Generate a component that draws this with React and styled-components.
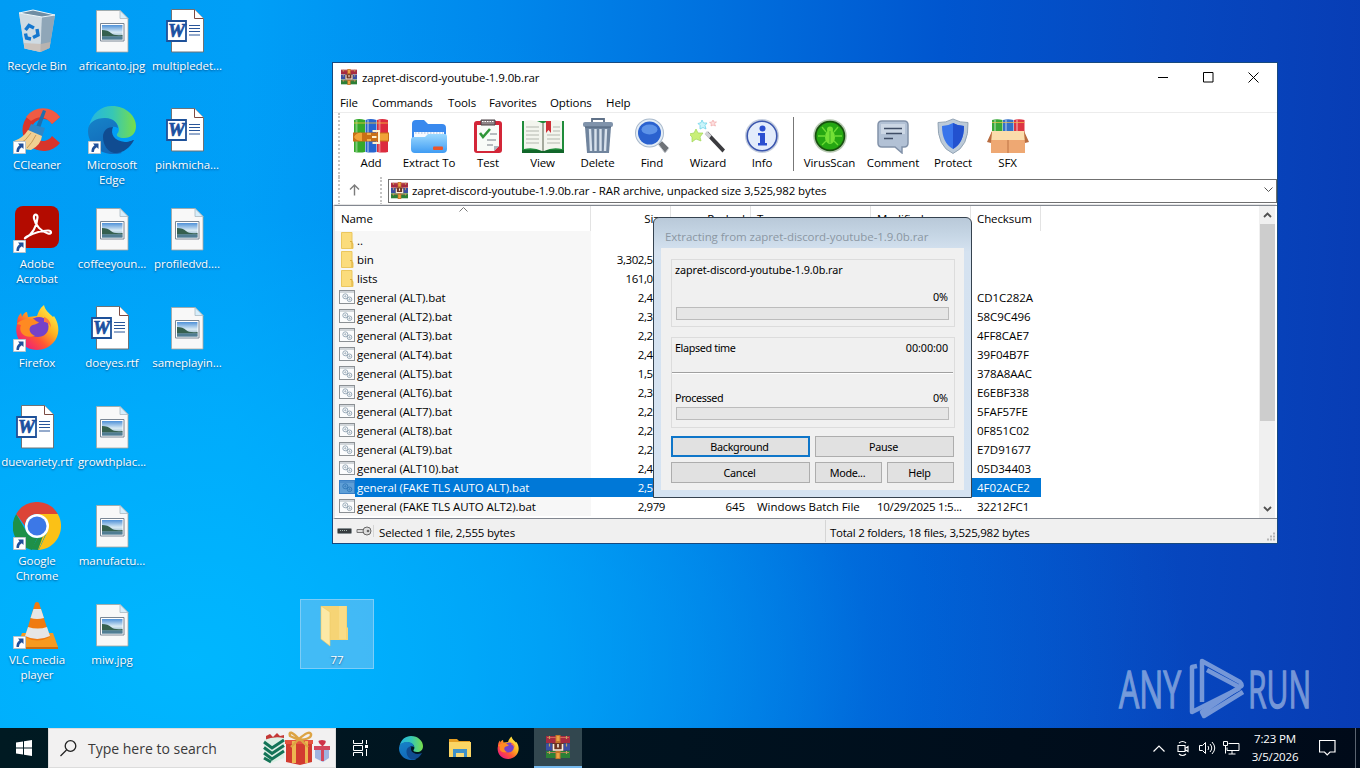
import { useId } from 'react';
import styled, { createGlobalStyle } from 'styled-components';

const GlobalStyle = createGlobalStyle`
  * {
    box-sizing: border-box;
  }

  body {
    margin: 0;
    overflow: hidden;
    font-family: 'Open Sans', sans-serif;
    font-size: 11.5px;
    letter-spacing: -0.1px;
    color: #000;
  }

  svg {
    display: block;
    flex: none;
  }
`;

const Screen = styled('div')`
  position: relative;
  display: flex;
  flex-direction: column;
  width: 1360px;
  height: 768px;
  overflow: hidden;
  background: radial-gradient(
      ellipse 1000px 660px at 190px 660px,
      rgba(0, 184, 255, 0.95),
      rgba(0, 180, 255, 0.62) 36%,
      rgba(0, 160, 250, 0.2) 68%,
      rgba(0, 150, 245, 0) 100%
    ),
    linear-gradient(
      92deg,
      #009cf4 0%,
      #009ff7 18%,
      #0088ec 36%,
      #0070de 52%,
      #0056cf 68%,
      #0648c0 84%,
      #083cb4 100%
    );
`;

const Desktop = styled('main')`
  display: grid;
  grid-template-columns: repeat(3, 75px);
  grid-template-rows: repeat(7, 99px);
  grid-auto-flow: column;
  height: 728px;
`;

const Shortcut = styled('div')`
  display: flex;
  flex-direction: column;
  align-items: center;
  padding-top: 7px;
  width: 74px;
`;

const ShortcutIcon = styled('div')`
  position: relative;
  width: 48px;
  height: 48px;
`;

const ShortcutLabel = styled('span')`
  margin-top: 3px;
  color: #fff;
  line-height: 15px;
  text-align: center;
  white-space: pre;
  letter-spacing: -0.05px;
  text-shadow: 0 1px 2px rgba(0, 40, 90, 0.7);
`;

const LinkBadge = styled('svg')`
  position: absolute;
  left: 0;
  bottom: 0;
`;

const SelectedFolder = styled('div')`
  position: absolute;
  left: 300px;
  top: 599px;
  display: flex;
  flex-direction: column;
  align-items: center;
  width: 74px;
  height: 70px;
  padding-top: 1px;
  background: rgba(120, 195, 240, 0.55);
  border: 1px solid #7ccdf8;
`;

const Watermark = styled('svg')`
  position: absolute;
  left: 1112px;
  top: 652px;
  overflow: visible;
`;

const Window = styled('section')`
  position: absolute;
  left: 332px;
  top: 62px;
  display: flex;
  flex-direction: column;
  width: 946px;
  height: 482px;
  padding-left: 1px;
  background: #fff;
  border: 1px solid #17497f;
`;

const TitleBar = styled('header')`
  display: flex;
  align-items: center;
  height: 28px;
  margin-bottom: 2px;
  padding: 0 3px 0 7px;
  gap: 5px;
`;

const Title = styled('span')`
  flex: 1;
  letter-spacing: -0.1px;
`;

const WindowButton = styled('span')`
  display: flex;
  justify-content: center;
  align-items: center;
  width: 40.5px;
  height: 28px;
`;

const MenuBar = styled('nav')`
  display: flex;
  align-items: center;
  gap: 14px;
  height: 20px;
  padding-left: 6px;
  border-bottom: 1px solid #ececec;
`;

const MenuItem = styled('span')`
  width: ${props => props.$width}px;
  white-space: nowrap;
`;

const ToolBar = styled('div')`
  display: flex;
  height: 64px;
  margin-left: 4px;
  padding-left: 5px;
  border-left: 2px dotted #c4c4c4;
`;

const Tool = styled('div')`
  display: flex;
  flex-direction: column;
  align-items: center;
  width: ${props => props.$width}px;
  padding-top: 5px;
  line-height: 16px;
  white-space: nowrap;
`;

const ToolLabel = styled('span')`
  margin-top: 1px;
`;

const ToolSeparator = styled('span')`
  width: 1px;
  height: 54px;
  margin: 4px 6px;
  background: #777;
`;

const AddressRow = styled('div')`
  display: flex;
  align-items: center;
  height: 28px;
  margin-left: 4px;
  border-left: 2px dotted #c4c4c4;
`;

const UpButton = styled('span')`
  display: flex;
  align-items: center;
  justify-content: center;
  width: 42px;
  height: 28px;
  padding: 0 11px 2px 0;
  border-right: 2px dotted #c4c4c4;
`;

const Address = styled('div')`
  display: flex;
  flex: 1;
  align-items: center;
  gap: 4px;
  height: 24px;
  margin-left: 6px;
  padding: 0 3px 2px 2px;
  border: 1px solid #707070;
`;

const AddressText = styled('span')`
  flex: 1;
  letter-spacing: -0.1px;
`;

const ListPanel = styled('div')`
  display: flex;
  height: 314px;
  margin-left: -1px;
  border-top: 1px solid #828790;
  border-bottom: 1px solid #828790;
  border-left: 2px solid #e6e6e6;
  box-shadow: 0 -2px 0 -1px #e4e4e4;
`;

const List = styled('div')`
  flex: 1;
  overflow: hidden;
`;

const HeadRow = styled('div')`
  position: relative;
  display: grid;
  grid-template-columns: 256px 80px 80px 120px 100px 70px;
  height: 25px;
`;

const HeadCell = styled('span')`
  padding: 5px 5px 0 6px;
  line-height: 16px;
  text-align: ${props => (props.$right ? 'right' : 'left')};
  border-right: 1px solid #e3e3e3;
`;

const SortMark = styled('svg')`
  position: absolute;
  left: 124px;
  top: 1px;
`;

const Row = styled('div')`
  display: grid;
  grid-template-columns: 256px 80px 80px 120px 100px 70px;
  height: 19px;
  line-height: 19px;
  color: ${props => (props.$selected ? '#fff' : '#000')};
  background: ${props =>
    props.$selected
      ? 'linear-gradient(90deg, #f7f7f7 20px, #0078d7 20px, #0078d7 706px, #fff 706px)'
      : 'linear-gradient(90deg, #f7f7f7 256px, #fff 256px)'};
`;

const NameCell = styled('span')`
  display: flex;
  align-items: center;
  gap: 2px;
  padding-left: 4px;
  white-space: nowrap;
`;

const Cell = styled('span')`
  overflow: hidden;
  padding: 0 6px;
  white-space: nowrap;
  letter-spacing: ${props => props.$spacing ?? -0.1}px;
  text-align: ${props => (props.$right ? 'right' : 'left')};
`;

const ScrollBar = styled('div')`
  display: flex;
  flex-direction: column;
  align-items: center;
  width: 16px;
  margin-right: 2px;
  background: #f0f0f0;
`;

const ScrollArrow = styled('span')`
  display: flex;
  align-items: center;
  justify-content: center;
  height: 18px;
`;

const ScrollThumb = styled('span')`
  width: 15px;
  height: 197px;
  margin-bottom: auto;
  background: #cdcdcd;
`;

const StatusBar = styled('footer')`
  display: flex;
  flex: 1;
  align-items: center;
  margin-left: -1px;
  padding-left: 1px;
  background: #f0f0f0;
`;

const StatusIcons = styled('span')`
  display: flex;
  gap: 3px;
  width: 40px;
  padding-left: 3px;
  border-right: 1px solid #d5d5d5;
`;

const StatusCell = styled('span')`
  width: ${props => props.$width}px;
  height: 22px;
  padding-left: ${props => (props.$last ? 4 : 5)}px;
  line-height: 25px;
  letter-spacing: ${props => (props.$last ? -0.25 : -0.18)}px;
  border-right: ${props => (props.$last ? 'none' : '1px solid #d5d5d5')};
`;

const Grip = styled('svg')`
  align-self: flex-end;
  margin-left: auto;
`;

const Dialog = styled('section')`
  position: absolute;
  left: 653px;
  top: 217px;
  display: flex;
  flex-direction: column;
  width: 319px;
  height: 281px;
  padding: 0 7px 7px;
  border: 1px solid #35424f;
  border-radius: 6px 6px 0 0;
  background: linear-gradient(
    180deg,
    #b9c9d9 0,
    #c5d5e4 16px,
    #d5e2f0 34px,
    #d5e3f2 100%
  );
  font-family: 'Noto Sans', 'Open Sans', sans-serif;
  font-size: 10.8px;
`;

const DialogTitle = styled('header')`
  height: 30px;
  padding: 11px 0 0 4px;
  line-height: 16px;
  font-family: 'Open Sans', sans-serif;
  font-size: 11.5px;
  letter-spacing: -0.06px;
  color: #8b97a3;
`;

const DialogBody = styled('div')`
  flex: 1;
  padding: 11px 9px 0 10px;
  background: #f0f0f0;
`;

const Group = styled('div')`
  display: flex;
  flex-direction: column;
  height: ${props => props.$height}px;
  margin-bottom: ${props => props.$gap}px;
  padding: 2px 5px 0 3px;
  border: 1px solid #dcdcdc;
`;

const GroupLine = styled('div')`
  display: flex;
  justify-content: space-between;
  height: 16px;
  line-height: 16px;
  margin-bottom: ${props => props.$gap}px;
  padding-right: 1px;
`;

const GroupText = styled('span')`
  letter-spacing: ${props => (props.$tight ? -0.38 : -0.08)}px;
`;

const Progress = styled('div')`
  height: 13px;
  margin-left: 1px;
  background: #e6e6e6;
  border: 1px solid #bcbcbc;
`;

const Divider = styled('div')`
  height: 2px;
  margin: 0 -4px 16px -3px;
  border-top: 1px solid #a0a0a0;
  border-bottom: 1px solid #fff;
`;

const Buttons = styled('div')`
  display: grid;
  grid-template-columns: 139px 67px 67px;
  grid-template-rows: 21px 21px;
  gap: 5px;
`;

const Button = styled('span')`
  grid-column: span ${props => props.$span ?? 1};
  padding-right: 2px;
  line-height: ${props => (props.$active ? 17 : 19)}px;
  letter-spacing: -0.3px;
  text-align: center;
  background: #e1e1e1;
  border: ${props => (props.$active ? '2px solid #0f76c9' : '1px solid #adadad')};
`;

const TaskBar = styled('footer')`
  display: flex;
  height: 40px;
  background: linear-gradient(90deg, #001a22 0%, #00121f 50%, #000a19 100%);
`;

const TaskButton = styled('span')`
  display: flex;
  align-items: center;
  justify-content: center;
  width: ${props => props.$width ?? 49}px;
  height: 40px;
  background: ${props => (props.$active ? '#32474f' : 'transparent')};
  border-bottom: ${props => (props.$active ? '2px solid #76b9ed' : 'none')};
`;

const Search = styled('div')`
  display: flex;
  align-items: center;
  width: 288px;
  padding: 0 4px 0 11px;
  background: #f2f1f1;
  border: 1px solid #dcdcdc;
`;

const SearchText = styled('span')`
  flex: 1;
  margin-left: 11px;
  font-size: 14px;
  letter-spacing: 0;
  color: #3a3a3a;
`;

const Tray = styled('div')`
  display: flex;
  align-items: center;
  margin-left: auto;
  color: #fff;
`;

const TrayIcon = styled('span')`
  display: flex;
  justify-content: center;
  width: 24px;
`;

const Clock = styled('div')`
  width: 64px;
  line-height: 18px;
  text-align: center;
  letter-spacing: -0.15px;
`;

const Notifications = styled('span')`
  display: flex;
  justify-content: center;
  width: 40px;
`;

const ShowDesktop = styled('span')`
  width: 5px;
  height: 40px;
  margin-left: 8px;
  border-left: 1px solid #5b6470;
`;

function ImageFile() {
  const id = useId();
  return (
    <svg width="48" height="48" viewBox="0 0 48 48">
      <defs>
        <linearGradient id={id} x2="0" y2="1">
          <stop offset="0" stopColor="#4f91d8" />
          <stop offset=".5" stopColor="#d8eaf4" />
          <stop offset="1" stopColor="#6d97ae" />
        </linearGradient>
      </defs>
      <path d="M8.500 3.500h23.500l8 8v33.500h-31.500z" fill="#f8f8f8" stroke="#a9a39c" strokeWidth=".8" />
      <path d="M32 3.500v8h8z" fill="#d7eefb" stroke="#a9b9c2" strokeWidth=".8" />
      <path d="M12.500 16.500h23.500v17.500h-23.500z" fill="#fff" stroke="#7a8694" />
      <path d="M14 18h20.500v14.500h-20.500z" fill={`url(#${id})`} />
      <path d="M14 23q6 0 9 3t11.500 2v1.500h-20.500z" fill="#35604f" />
      <path d="M14 29.500h20.500v3h-20.500z" fill="#507d93" />
    </svg>
  );
}

function WordFile() {
  return (
    <svg width="48" height="48" viewBox="0 0 48 48">
      <path d="M8.500 2.500h23l9 9v33.500h-32z" fill="#fff" stroke="#6f7276" />
      <path d="M31.500 2.500v9h9" fill="#fff" stroke="#7c4a42" />
      <path d="M26 18.500h11M26 21.500h11M26 24.500h11M26 28h11" stroke="#2a5699" />
      <path d="M4 14h19v20h-19z" fill="#fff" stroke="#1e5199" strokeWidth="1.800" />
      <text
        x="13.500"
        y="30"
        textAnchor="middle"
        textLength="17"
        lengthAdjust="spacingAndGlyphs"
        fontFamily="Liberation Serif"
        fontSize="18"
        fontWeight="bold"
        fontStyle="italic"
        fill="#1c50a0"
        stroke="#1c50a0"
        strokeWidth=".7"
      >
        W
      </text>
    </svg>
  );
}

function RecycleBin() {
  return (
    <svg width="48" height="48" viewBox="0 0 48 48">
      <path d="M6 6l36 2-5.500 33-9 4-16-3.500z" fill="#a9bccb" />
      <path d="M6 6l23 4-1.500 35-16-3.500z" fill="#cfdbe3" />
      <path d="M29 10l13-2-5.500 33-9 4z" fill="#8fa6b8" />
      <path d="M6 6l14-3 22 5-13 2z" fill="#6f8da3" stroke="#eef6fa" />
      <path d="M11 36l17 1-.5 8-16-3.500zM28 37l9.500-2-1 6-9 4z" fill="#c9b9ad" opacity=".7" />
      <g fill="none" stroke="#1477cf" strokeWidth="3.400">
        <path d="M12.500 23l3.500-4.500 5 2.500" />
        <path d="M24 22l1 6-5 2.500" />
        <path d="M18 32l-4.500-1-1-4.500" />
      </g>
    </svg>
  );
}

function CCleaner() {
  return (
    <svg width="48" height="48" viewBox="0 0 48 48">
      <path d="M47 11A21 21 0 1 0 47 37l-8-7a11 11 0 1 1 0-12z" fill="#d8352b" />
      <path d="M47 11A21 21 0 0 0 13 11l5 4q12-9 21 3z" fill="#ef5b43" />
      <path d="M30 4l3 1-7 20-4-2z" fill="#1f6fae" />
      <path d="M18 18l14 4-3 9-14-6z" fill="#2f87c8" />
      <path d="M15 24l14 6q-1 9-11 14-9 0-17-9 9-3 14-11z" fill="#f0cf92" />
      <path d="M18 27q-5 8-12 11M23 29q-4 8-9 13" stroke="#c99a57" fill="none" />
    </svg>
  );
}

function EdgeLogo({ size = 48 }) {
  const id = useId();
  return (
    <svg width={size} height={size} viewBox="0 0 48 48">
      <defs>
        <linearGradient id={`${id}t`}>
          <stop offset="0" stopColor="#25b5e2" />
          <stop offset=".5" stopColor="#36c7b5" />
          <stop offset="1" stopColor="#78de49" />
        </linearGradient>
        <linearGradient id={`${id}b`} y2="1" x2=".4">
          <stop offset="0" stopColor="#1683c8" />
          <stop offset="1" stopColor="#1269b9" />
        </linearGradient>
      </defs>
      <path d="M1 20C4 7 13 0 24 0c14 0 24 10 24 20 0 8-5 12-12 12-5 0-8-2-7-4 4-3 2-14-10-15C9 12 3 16 1 20z" fill={`url(#${id}t)`} />
      <path d="M0 25C0 16 8 12 17 12c9 0 13 6 13 10-11-6-17 11-2 20l6 5C17 52 0 41 0 25z" fill={`url(#${id}b)`} />
      <path d="M15 31c0-6 4-10 10-10-3 7 1 14 12 15 5 0 7-2 9-2-4 8-12 14-20 13-6-1-11-8-11-16z" fill="#104c91" />
    </svg>
  );
}

function Acrobat() {
  return (
    <svg width="48" height="48" viewBox="0 0 48 48">
      <rect x="2" y="1" width="44" height="42" rx="8" fill="#b30b00" />
      <path d="M13 32.500c6-3 11-11 11.500-20 .2-4-4.500-4-3.500 1 1.500 7 7 13 14 15 4 1 4-3 0-3-8 0-15 3-21 6-2 1-3 3-1 1z" fill="none" stroke="#fff" strokeWidth="2.200" />
    </svg>
  );
}

function FirefoxLogo({ size = 48 }) {
  const id = useId();
  return (
    <svg width={size} height={size} viewBox="0 0 48 48">
      <defs>
        <linearGradient id={`${id}f`} x1=".9" y1=".1" x2=".2" y2=".9">
          <stop offset="0" stopColor="#fff04c" />
          <stop offset=".4" stopColor="#ffb01f" />
          <stop offset=".7" stopColor="#ff5634" />
          <stop offset="1" stopColor="#f02374" />
        </linearGradient>
      </defs>
      <path d="M4 20c0-5 1-8 4-11l1 4c1-3 3-5 5-5l1 5 9-1c2-5 3-8 7-11 1 5 5 8 9 12l1-1c6 9 6 20-1 27-8 9-23 9-31 1-5-5-7-13-5-20z" fill={`url(#${id}f)`} />
      <path d="M16 18c5-6 14-7 18-1 4 7 0 16-9 16-7 0-11-5-10-11z" fill="#7542c9" />
      <path d="M4 20c3-4 9-6 17-5 1 1 3 3 5 3-2 3-6 2-8 4-3 3-1 8 4 10-11 3-17-4-14-11z" fill="#ff8a22" />
      <path d="M31 13c5 2 7 6 7 11-1-4-4-6-7-6z" fill="#ff7540" />
    </svg>
  );
}

function ChromeLogo() {
  return (
    <svg width="48" height="48" viewBox="0 0 48 48">
      <path d="M24 12h20.800a24 24 0 0 1-19 36l8.500-18z" fill="#fbc116" />
      <path d="M3.200 12l10.500 18q4 7 11 5l-6 13A24 24 0 0 1 3.200 12z" fill="#1e9048" />
      <path d="M18 47.500l8-14 8-4-8.500 18.500z" fill="#1e9048" />
      <path d="M34 29l-8.500 19H25l6-17z" fill="#fbc116" />
      <path d="M3.200 12A24 24 0 0 1 44.800 12H24a12 12 0 0 0-12 12z" fill="#dc4437" />
      <circle cx="24" cy="24" r="12" fill="#fff" />
      <circle cx="24" cy="24" r="9.500" fill="#3c78e7" />
    </svg>
  );
}

function VlcCone() {
  return (
    <svg width="48" height="48" viewBox="0 0 48 48">
      <path d="M9 32h31l5 14-5 2H3z" fill="#f79a1f" />
      <path d="M3 46h42v2H3z" fill="#c96b10" />
      <path d="M22 2q2-2 4 0l11 34q-13 7-25 0z" fill="#f07a10" />
      <path d="M20.500 8h7.500l3 9q-7 2-13.500 0zM15 26q10 3 19 0l3 9q-13 6-25 0z" fill="#e6e6e6" />
    </svg>
  );
}

function FolderIcon() {
  return (
    <svg width="48" height="48" viewBox="0 0 48 48">
      <path d="M8 5h26v21l1 1v12H17z" fill="#f6d475" />
      <path d="M26 5h7v33h-7z" fill="#f9dc87" />
      <path d="M8 5l9 6v34l-9-7z" fill="#fce9a6" stroke="#efc965" strokeWidth=".6" />
    </svg>
  );
}

function Winrar({ size = 16 }) {
  return (
    <svg width={size} height={size} viewBox="0 0 24 24">
      <path d="M0 1h24v7H0z" fill="#a52a40" />
      <path d="M0 8.500h24v7H0z" fill="#3b4fa3" />
      <path d="M0 16h24v7H0z" fill="#2c7f36" />
      <path d="M1 2.500h22M1 17.500h22" stroke="#d97862" strokeWidth=".8" />
      <path d="M3.500 1v22M20.500 1v22" stroke="#c3a35a" strokeDasharray="3 4.500" strokeWidth="1.200" />
      <path d="M9.500 0h5v24h-5z" fill="#c4742a" />
      <path d="M10.500 1h3v5h-3zM10.500 18h3v5h-3z" fill="#eba244" />
      <path d="M6.500 8h11v8h-11z" fill="#6d3524" />
      <path d="M7.500 9v6h9V9M12 9v3.500" fill="none" stroke="#fbeedd" strokeWidth="1.600" />
    </svg>
  );
}

function AddIcon() {
  return (
    <svg width="36" height="36" viewBox="0 0 36 36">
      <path d="M1 2q5-2 11 0v32q-5 1-11 0z" fill="#35a92b" />
      <path d="M12.500 2q5-2 11 0v32q-5 1-11 0z" fill="#2866cf" />
      <path d="M24 2q5-2 11 0v32q-5 1-11 0z" fill="#dc2c3e" />
      <path d="M3.500 2v32M15 2v32M26.500 2v32" stroke="#fff" opacity=".35" strokeWidth="2" />
      <path d="M1 5h34" stroke="#f5c33b" strokeWidth=".8" />
      <path d="M0 14.500h36v9H0z" fill="#c96f16" />
      <path d="M1 19q3-5 8-4v8q-6 0-8-4zM27 15.500h8v7h-8z" fill="#f0a337" />
      <path d="M14 16h4M14 22h4" stroke="#ffc55d" strokeWidth="1.500" />
      <path d="M19.500 13h6.500v12h-6.500M19 19h4.500" fill="none" stroke="#fff1cf" strokeWidth="2" />
    </svg>
  );
}

function ExtractIcon() {
  const id = useId();
  return (
    <svg width="38" height="36" viewBox="0 0 38 36">
      <defs>
        <linearGradient id={id} x2="0" y2="1">
          <stop offset="0" stopColor="#9bd9ff" />
          <stop offset="1" stopColor="#3f9cf3" />
        </linearGradient>
      </defs>
      <path d="M2 6q0-4 4-4h8l4 4h14q4 0 4 4v18H2z" fill="#3989ee" />
      <path d="M4 14h30v10H4z" fill="#f7faff" />
      <path d="M5 15h28" stroke="#c3d0e8" strokeWidth="1.500" strokeDasharray="1.500 1.500" />
      <path d="M1 22q0-3 3-3h11l3-3h17q2 0 2 3v12q0 4-4 4H5q-4 0-4-4z" fill={`url(#${id})`} />
      <rect x="23" y="28.500" width="10" height="3.500" rx="1" fill="#eb5429" />
    </svg>
  );
}

function TestIcon() {
  return (
    <svg width="30" height="36" viewBox="0 0 30 36">
      <rect x="1" y="3" width="28" height="32" rx="3" fill="#d32638" />
      <path d="M4 7h22v21l-5 5H4z" fill="#f8fbf8" />
      <path d="M26 28h-5v5z" fill="#aab8c0" />
      <path d="M8 2h14v5H8z" fill="#8f8588" stroke="#4a4144" />
      <path d="M9 3.500h12" stroke="#fff" strokeDasharray="1.500 1" />
      <path d="M7 15l3 4 7-8" fill="none" stroke="#2f9638" strokeWidth="2.600" />
      <path d="M17 16h7M14 22h9M14 27h6" stroke="#a0a7aa" strokeWidth="1.600" />
    </svg>
  );
}

function ViewIcon() {
  return (
    <svg width="44" height="36" viewBox="0 0 44 36">
      <path d="M1 3h42v32H1z" fill="#1f8c3a" />
      <path d="M1 32h42v3H1z" fill="#12662a" />
      <path d="M3 3q11-2 18 2v28q-8-4-18-2zM41 3q-11-2-18 2v28q8-4 18-2z" fill="#f3f5ee" />
      <path d="M21 5v28h2V5z" fill="#a4a99c" />
      <path d="M5 9h13M5 13h13M5 17h13M5 21h13M5 25h13M26 17h13M26 21h13M26 25h13M32 9h7M32 13h7" stroke="#c9ccc3" strokeWidth="1.300" />
      <path d="M25 3h5v12l-2.500-3-2.500 3z" fill="#cf2f36" />
    </svg>
  );
}

function DeleteIcon() {
  return (
    <svg width="32" height="36" viewBox="0 0 32 36">
      <path d="M10 4V1h12v3" fill="none" stroke="#5f7188" strokeWidth="1.800" />
      <rect x="1" y="4" width="30" height="5" rx="2" fill="#8093ab" />
      <path d="M3 9h26l-2 26H5z" fill="#70849d" />
      <path d="M8 11l1 22M13.500 11v22M18.500 11v22M24 11l-1 22" stroke="#d7e1ec" strokeWidth="2.400" />
      <path d="M3 9h26" stroke="#4f6178" />
    </svg>
  );
}

function FindIcon() {
  return (
    <svg width="36" height="36" viewBox="0 0 36 36">
      <path d="M24 26l4-3 7 7-4 5z" fill="#6f7378" stroke="#c9cdd2" />
      <circle cx="15.500" cy="15" r="14.500" fill="#a9b9cb" />
      <circle cx="15.500" cy="15" r="13.500" fill="#e4edf6" />
      <circle cx="15.500" cy="15" r="11.500" fill="#2b62cf" />
      <ellipse cx="15.500" cy="11.500" rx="8" ry="5" fill="#5d93e8" />
    </svg>
  );
}

function WizardIcon() {
  return (
    <svg width="36" height="36" viewBox="0 0 36 36">
      <path d="M15.500 16.500l2.500-3 17 18-2.500 3z" fill="#3b3b3f" />
      <path d="M14.500 16l2.500-3 4.500 4.500-2.500 3z" fill="#cfd0d4" />
      <path d="M6 11l2 4 5 0-3 4 1 4-5-2-4 3 0-5-3-3 5-1z" fill="#c9ef78" stroke="#9fd65a" strokeWidth=".7" />
      <path d="M12 2l1.500 3 3.500 0-2 2.500 1 3.500-3-1.500-3 1.500 0-3.500-2-2 3-.8z" fill="#c9f5fb" stroke="#6fd3e8" strokeWidth=".8" />
      <path d="M23 2l.8 2 2.700 0-2 1.600 1 2.400-2.500-1-2 1 .3-2.400-1.800-1.200 2.500-.4z" fill="#fde0e0" stroke="#f0a0a0" strokeWidth=".6" />
    </svg>
  );
}

function InfoIcon() {
  return (
    <svg width="36" height="36" viewBox="0 0 36 36">
      <circle cx="18" cy="18" r="17" fill="#c6cfdf" />
      <circle cx="18" cy="18" r="14.800" fill="#e3ecfb" stroke="#3b56ae" strokeWidth="1.600" />
      <circle cx="18.500" cy="10.500" r="3" fill="#2b4fd0" />
      <path d="M14 15h7v10h2v2.500h-9V25h2v-7.500h-2z" fill="#2b4fd0" />
    </svg>
  );
}

function VirusIcon() {
  return (
    <svg width="36" height="36" viewBox="0 0 36 36">
      <circle cx="18" cy="18" r="16.800" fill="#b9c9b4" />
      <circle cx="18" cy="18" r="15.300" fill="#18510f" />
      <circle cx="18" cy="18" r="13.600" fill="#25a712" />
      <path d="M10 9l4 5M26 9l-4 5M6 18h7M30 18h-7M10 27l4-4M26 27l-4-4" stroke="#6cdc34" strokeWidth="1.300" />
      <ellipse cx="18" cy="19" rx="5" ry="7" fill="#73e036" />
      <circle cx="18" cy="11.500" r="3" fill="#73e036" />
      <path d="M18 13v12" stroke="#3cb222" />
    </svg>
  );
}

function CommentIcon() {
  return (
    <svg width="34" height="36" viewBox="0 0 34 36">
      <path d="M6 3h22q4 0 4 4v18q0 4-4 4h-2v6l-7-6H6q-4 0-4-4V7q0-4 4-4z" fill="#b2c1d5" stroke="#8292a9" strokeWidth="1.500" />
      <path d="M5 6h24v10H5z" fill="#ccd7e5" />
      <path d="M8 10.500h18M10 15.500h16M8 20.500h9" stroke="#3f4d66" strokeWidth="1.500" />
    </svg>
  );
}

function ProtectIcon() {
  return (
    <svg width="32" height="36" viewBox="0 0 32 36">
      <path d="M16 1q7 4 15 3.500 1 24-15 31Q0 28.500 1 4.500 9 5 16 1z" fill="#bccad8" stroke="#94a5b5" />
      <path d="M16 5q5 3 11 3 0 17-11 23Q5 25 5 8q6 0 11-3z" fill="#3874eb" />
      <path d="M16 5q5 3 11 3 0 17-11 23z" fill="#2251cf" />
    </svg>
  );
}

function SfxIcon() {
  return (
    <svg width="42" height="36" viewBox="0 0 42 36">
      <path d="M5 2q5-1.500 10.500 0v13H5z" fill="#39a838" />
      <path d="M16 2q5-1.500 10.500 0v13H16z" fill="#3471c8" />
      <path d="M27 2q5-1.500 10.500 0v13H27z" fill="#dd3543" />
      <path d="M8 2v12M19 2v12M30 2v12" stroke="#fff" opacity=".35" strokeWidth="2" />
      <path d="M5 4.500h32.500" stroke="#f3c04c" strokeWidth=".7" />
      <path d="M4 14h34v21H4z" fill="#eea873" />
      <path d="M5 13h32l1 9H4z" fill="#fbdcab" />
      <path d="M5 13L0 24l4 1zM37 13l5 11-4 1z" fill="#b86c3f" />
      <path d="M21 22v13" stroke="#bd7345" />
    </svg>
  );
}

function BatchIcon({ selected }) {
  return (
    <svg width="16" height="15" viewBox="0 0 16 15">
      <rect x=".5" y=".5" width="15" height="13" fill={selected ? '#5f9fd6' : '#fbfcfd'} stroke={selected ? '#3a7fc4' : '#8b9094'} />
      <path d="M1 2h14" stroke={selected ? '#3a7fc4' : '#a9b1b8'} />
      <g fill="none" stroke={selected ? '#2f77b8' : '#8fa1b1'} strokeWidth=".9">
        <circle cx="6.300" cy="6.300" r="2.500" />
        <circle cx="10.500" cy="9.300" r="2.300" />
        <circle cx="6.300" cy="6.300" r=".6" />
        <circle cx="10.500" cy="9.300" r=".6" />
      </g>
    </svg>
  );
}

function SmallFolder() {
  return (
    <svg width="16" height="17" viewBox="0 0 16 17">
      <path d="M2.500.5h10.500v11h1v5H2.500z" fill="#fbdc7c" stroke="#ebc75e" />
      <path d="M11 9.500h2v6.500" fill="none" stroke="#dcae3c" />
    </svg>
  );
}

function Gifts() {
  return (
    <svg width="68" height="34" viewBox="0 0 68 34">
      <path d="M3 5l4-2 3 3 4-4 3 3 4-1v6H3z" fill="#c43836" />
      <path d="M1 9q10-4 20-2v20l-13 5-7-4z" fill="#dcefe4" />
      <path d="M1 11l8 6 12-8M1 16.500l8 6 12-8M1 22l8 6 12-8M1 27l7 4" fill="none" stroke="#137457" strokeWidth="3" />
      <path d="M23 10h26v21l-12 3-14-3z" fill="#d23b30" />
      <path d="M22 9h28v4H22z" fill="#e5533f" />
      <path d="M29 10h4v22h-4zM42 10h3v22h-3z" fill="#edb650" />
      <path d="M36 8Q25-3 27 5l9 4q13-1 12-6-2-4-12 5zM35 9l-7 7M38 9l7 7" fill="none" stroke="#dda444" strokeWidth="2.400" />
      <path d="M52 17h14v10l-6 4-8-4z" fill="#9fb4e0" />
      <path d="M51 15h16v4H51zM58 16h3v14h-3z" fill="#d2475c" />
      <path d="M59 15q-7-6 0-6 7 0 1 6z" fill="#cf3349" />
    </svg>
  );
}

const shortcuts = [
  { name: 'Recycle Bin', icon: RecycleBin },
  { name: 'CCleaner', icon: CCleaner, link: true },
  { name: 'Adobe\nAcrobat', icon: Acrobat, link: true },
  { name: 'Firefox', icon: FirefoxLogo, link: true },
  { name: 'duevariety.rtf', icon: WordFile },
  { name: 'Google\nChrome', icon: ChromeLogo, link: true },
  { name: 'VLC media\nplayer', icon: VlcCone, link: true },
  { name: 'africanto.jpg', icon: ImageFile },
  { name: 'Microsoft\nEdge', icon: EdgeLogo, link: true },
  { name: 'coffeeyoun...', icon: ImageFile },
  { name: 'doeyes.rtf', icon: WordFile },
  { name: 'growthplac...', icon: ImageFile },
  { name: 'manufactu...', icon: ImageFile },
  { name: 'miw.jpg', icon: ImageFile },
  { name: 'multipledet...', icon: WordFile },
  { name: 'pinkmicha...', icon: WordFile },
  { name: 'profiledvd....', icon: ImageFile },
  { name: 'sameplayin...', icon: ImageFile },
];

const menu = [
  ['File', 18],
  ['Commands', 62],
  ['Tools', 27],
  ['Favorites', 47],
  ['Options', 42],
  ['Help', 26],
];

const tools = [
  ['Add', 52, AddIcon],
  ['Extract To', 64, ExtractIcon],
  ['Test', 54, TestIcon],
  ['View', 55, ViewIcon],
  ['Delete', 55, DeleteIcon],
  ['Find', 54, FindIcon],
  ['Wizard', 58, WizardIcon],
  ['Info', 50, InfoIcon],
];

const extraTools = [
  ['VirusScan', 59, VirusIcon],
  ['Comment', 68, CommentIcon],
  ['Protect', 52, ProtectIcon],
  ['SFX', 57, SfxIcon],
];

const files = [
  { name: '..', folder: true },
  { name: 'bin', size: '3,302,536', folder: true },
  { name: 'lists', size: '161,046', folder: true },
  { name: 'general (ALT).bat', size: '2,431', sum: 'CD1C282A' },
  { name: 'general (ALT2).bat', size: '2,368', sum: '58C9C496' },
  { name: 'general (ALT3).bat', size: '2,284', sum: '4FF8CAE7' },
  { name: 'general (ALT4).bat', size: '2,405', sum: '39F04B7F' },
  { name: 'general (ALT5).bat', size: '1,562', sum: '378A8AAC' },
  { name: 'general (ALT6).bat', size: '2,389', sum: 'E6EBF338' },
  { name: 'general (ALT7).bat', size: '2,274', sum: '5FAF57FE' },
  { name: 'general (ALT8).bat', size: '2,259', sum: '0F851C02' },
  { name: 'general (ALT9).bat', size: '2,260', sum: 'E7D91677' },
  { name: 'general (ALT10).bat', size: '2,482', sum: '05D34403' },
  {
    name: 'general (FAKE TLS AUTO ALT).bat',
    size: '2,555',
    sum: '4F02ACE2',
    selected: true,
  },
  {
    name: 'general (FAKE TLS AUTO ALT2).bat',
    size: '2,979',
    packed: '645',
    type: 'Windows Batch File',
    modified: '10/29/2025 1:5...',
    sum: '32212FC1',
  },
];

function Tools({ items }) {
  return items.map(([name, width, Icon]) => (
    <Tool key={name} $width={width}>
      <Icon />
      <ToolLabel>{name}</ToolLabel>
    </Tool>
  ));
}

function ArchiveWindow() {
  return (
    <Window>
      <TitleBar>
        <Winrar />
        <Title>zapret-discord-youtube-1.9.0b.rar</Title>
        <WindowButton>
          <svg width="10" height="10">
            <path d="M0 5.500h10" stroke="#000" />
          </svg>
        </WindowButton>
        <WindowButton>
          <svg width="11" height="11">
            <path d="M.5.500h9.500v9.500h-9.500z" fill="none" stroke="#000" />
          </svg>
        </WindowButton>
        <WindowButton>
          <svg width="11" height="11">
            <path d="M.5.500l10 10M10.500.500l-10 10" stroke="#000" />
          </svg>
        </WindowButton>
      </TitleBar>
      <MenuBar>
        {menu.map(([name, width]) => (
          <MenuItem key={name} $width={width}>
            {name}
          </MenuItem>
        ))}
      </MenuBar>
      <ToolBar>
        <Tools items={tools} />
        <ToolSeparator />
        <Tools items={extraTools} />
      </ToolBar>
      <AddressRow>
        <UpButton>
          <svg width="11" height="12">
            <path d="M5.500 11.500V1.500M1 5.500l4.500-4.500 4.500 4.500" fill="none" stroke="#7c7c7c" strokeWidth="1.400" />
          </svg>
        </UpButton>
        <Address>
          <Winrar size={17} />
          <AddressText>
            zapret-discord-youtube-1.9.0b.rar - RAR archive, unpacked size
            3,525,982 bytes
          </AddressText>
          <svg width="9" height="6">
            <path d="M.5.500l4 4 4-4" fill="none" stroke="#555" />
          </svg>
        </Address>
      </AddressRow>
      <ListPanel>
        <List>
          <HeadRow>
            <HeadCell>Name</HeadCell>
            <HeadCell $right>Size</HeadCell>
            <HeadCell $right>Packed</HeadCell>
            <HeadCell>Type</HeadCell>
            <HeadCell>Modified</HeadCell>
            <HeadCell>Checksum</HeadCell>
            <SortMark width="9" height="5">
              <path d="M.5 4.500l4-4 4 4" fill="none" stroke="#777" />
            </SortMark>
          </HeadRow>
          {files.map(file => (
            <Row key={file.name} $selected={file.selected}>
              <NameCell>
                {file.folder ? (
                  <SmallFolder />
                ) : (
                  <BatchIcon selected={file.selected} />
                )}
                {file.name}
              </NameCell>
              <Cell $right $spacing={-0.42}>
                {file.size}
              </Cell>
              <Cell $right>{file.packed}</Cell>
              <Cell $spacing={-0.05}>{file.type}</Cell>
              <Cell $spacing={-0.27}>{file.modified}</Cell>
              <Cell $spacing={-0.05}>{file.sum}</Cell>
            </Row>
          ))}
        </List>
        <ScrollBar>
          <ScrollArrow>
            <svg width="9" height="6">
              <path d="M1 5l3.500-3.500L8 5" fill="none" stroke="#505050" strokeWidth="1.800" />
            </svg>
          </ScrollArrow>
          <ScrollThumb />
          <ScrollArrow>
            <svg width="9" height="6">
              <path d="M1 1l3.500 3.500L8 1" fill="none" stroke="#505050" strokeWidth="1.800" />
            </svg>
          </ScrollArrow>
        </ScrollBar>
      </ListPanel>
      <StatusBar>
        <StatusIcons>
          <svg width="16" height="12" viewBox="0 0 16 12">
            <rect x=".5" y="3.500" width="14" height="5" rx="1" fill="#353b3e" stroke="#868e91" />
            <path d="M3 5.500h8" stroke="#a5b4ad" strokeDasharray="1 1" />
          </svg>
          <svg width="16" height="12" viewBox="0 0 16 12">
            <path d="M9 4.500H1v3h8" fill="#ddd" stroke="#777" />
            <circle cx="11" cy="6" r="4" fill="#ddd" stroke="#666" />
            <circle cx="12" cy="6" r="1.300" fill="#666" />
          </svg>
        </StatusIcons>
        <StatusCell $width={452}>Selected 1 file, 2,555 bytes</StatusCell>
        <StatusCell $width={300} $last>
          Total 2 folders, 18 files, 3,525,982 bytes
        </StatusCell>
        <Grip width="11" height="11">
          <path d="M7 1.500h2M4 4.500h2M7 4.500h2M1 7.500h2M4 7.500h2M7 7.500h2" stroke="#b5b5b5" strokeWidth="2" />
        </Grip>
      </StatusBar>
    </Window>
  );
}

function ExtractDialog() {
  return (
    <Dialog>
      <DialogTitle>Extracting from zapret-discord-youtube-1.9.0b.rar</DialogTitle>
      <DialogBody>
        <Group $height={68} $gap={10}>
          <GroupLine $gap={11}>
            <GroupText>zapret-discord-youtube-1.9.0b.rar</GroupText>
          </GroupLine>
          <GroupLine $gap={2}>
            <GroupText />
            <GroupText>0%</GroupText>
          </GroupLine>
          <Progress />
        </Group>
        <Group $height={91} $gap={8}>
          <GroupLine $gap={16}>
            <GroupText $tight>Elapsed time</GroupText>
            <GroupText>00:00:00</GroupText>
          </GroupLine>
          <Divider />
          <GroupLine $gap={1}>
            <GroupText $tight>Processed</GroupText>
            <GroupText>0%</GroupText>
          </GroupLine>
          <Progress />
        </Group>
        <Buttons>
          <Button $active>Background</Button>
          <Button $span={2}>Pause</Button>
          <Button>Cancel</Button>
          <Button>Mode...</Button>
          <Button>Help</Button>
        </Buttons>
      </DialogBody>
    </Dialog>
  );
}

function AnyRun() {
  return (
    <Watermark width="208" height="76" viewBox="-4 0 208 76" opacity=".62">
      <g
        fill="#b9cbea"
        stroke="#b9cbea"
        strokeWidth="1.300"
        fontFamily="Open Sans"
        fontSize="51"
      >
        <text x="3" y="56" textLength="62" lengthAdjust="spacingAndGlyphs">
          ANY
        </text>
        <text x="132" y="56" textLength="63" lengthAdjust="spacingAndGlyphs">
          RUN
        </text>
      </g>
      <g fill="none" stroke="#b9cbea" strokeWidth="4.500" strokeLinejoin="round">
        <path d="M81 14l-5 1v45l48-24" />
        <path d="M86 50V9l38 21q4 4-1 5L91 18" />
        <path d="M127 40L88 64l-2-4 35-23" />
      </g>
    </Watermark>
  );
}

function Taskbar() {
  return (
    <TaskBar>
      <TaskButton $width={48}>
        <svg width="16" height="16" viewBox="0 0 16 16">
          <path d="M0 2.500l7-1v6H0zM8 1.300L16 0v7.500H8zM0 8.500h7v6l-7-1zM8 8.500h8V16l-8-1.300z" fill="#fff" />
        </svg>
      </TaskButton>
      <Search>
        <svg width="17" height="17" viewBox="0 0 17 17">
          <circle cx="10.500" cy="6" r="5.300" fill="none" stroke="#222" strokeWidth="1.300" />
          <path d="M6.500 10L.5 16" stroke="#222" strokeWidth="1.300" />
        </svg>
        <SearchText>Type here to search</SearchText>
        <Gifts />
      </Search>
      <TaskButton>
        <svg width="17" height="16" viewBox="0 0 17 16">
          <path d="M1.500 0v3.500h9V0M1.500 16v-3.500h9V16M1.500 5.500h9v5h-9zM14.500 0v4M14.500 9v7" fill="none" stroke="#fff" />
          <path d="M13 5h3v3h-3z" fill="#fff" />
        </svg>
      </TaskButton>
      <TaskButton $width={52}>
        <EdgeLogo size={24} />
      </TaskButton>
      <TaskButton $width={45}>
        <svg width="22" height="20" viewBox="0 0 22 20">
          <path d="M0 1h8l2 2h11v5H0z" fill="#e59e21" />
          <path d="M0 4h22v15H0z" fill="#fbd564" />
          <path d="M4 11h14v8h-3v-4H7v4H4z" fill="#3f91c9" />
          <path d="M7 15h8v4H7z" fill="#f8d977" />
        </svg>
      </TaskButton>
      <TaskButton $width={52}>
        <FirefoxLogo size={24} />
      </TaskButton>
      <TaskButton $width={48} $active>
        <Winrar size={24} />
      </TaskButton>
      <Tray>
        <TrayIcon>
          <svg width="12" height="7">
            <path d="M.5 6.500l5.500-5.500 5.500 5.500" fill="none" stroke="#fff" strokeWidth="1.200" />
          </svg>
        </TrayIcon>
        <TrayIcon>
          <svg width="12" height="17" viewBox="0 0 12 17">
            <path d="M1 5.500h7v6H1zM8 8.500l3-2v5l-3-2M2 3q3.500-3 7 0M2 14q3.500 3 7 0" fill="none" stroke="#fff" strokeWidth="1.100" />
          </svg>
        </TrayIcon>
        <TrayIcon>
          <svg width="17" height="14" viewBox="0 0 17 14">
            <path d="M.5 4.500h3l3-3v11l-3-3h-3zM9 5q1.500 2 0 4M11 3q3.500 4 0 8M13 1q5.500 6 0 12" fill="none" stroke="#fff" />
          </svg>
        </TrayIcon>
        <TrayIcon>
          <svg width="17" height="14" viewBox="0 0 17 14">
            <path d="M5.500 2.500h10.500v7h-12v-3M.5.500h4v4h-4zM2.500 4.500v8M9 9.500v3.500M5.500 13h7" fill="none" stroke="#fff" />
          </svg>
        </TrayIcon>
        <Clock>
          <div>7:23 PM</div>
          <div>3/5/2026</div>
        </Clock>
        <Notifications>
          <svg width="17" height="16" viewBox="0 0 17 16">
            <path d="M.5.500h15.500v11.500h-5l-2.800 2.800L5.500 12h-5z" fill="none" stroke="#fff" strokeWidth="1.200" />
          </svg>
        </Notifications>
        <ShowDesktop />
      </Tray>
    </TaskBar>
  );
}

export default function App() {
  return (
    <>
      <GlobalStyle />
      <Screen>
        <Desktop>
          {shortcuts.map(({ name, icon: Icon, link }) => (
            <Shortcut key={name}>
              <ShortcutIcon>
                <Icon />
                {link && (
                  <LinkBadge width="13" height="13" viewBox="0 0 13 13">
                    <path d="M.5.500h12v12H.5z" fill="#fff" stroke="#b9c4cc" />
                    <path d="M5 2.500h5.500V8L8.800 6.300Q6 7.500 5.800 11H3.500Q3 7 6.500 4.200z" fill="#1f4f9a" />
                  </LinkBadge>
                )}
              </ShortcutIcon>
              <ShortcutLabel>{name}</ShortcutLabel>
            </Shortcut>
          ))}
        </Desktop>
        <Taskbar />
        <AnyRun />
        <SelectedFolder>
          <FolderIcon />
          <ShortcutLabel>77</ShortcutLabel>
        </SelectedFolder>
        <ArchiveWindow />
        <ExtractDialog />
      </Screen>
    </>
  );
}
